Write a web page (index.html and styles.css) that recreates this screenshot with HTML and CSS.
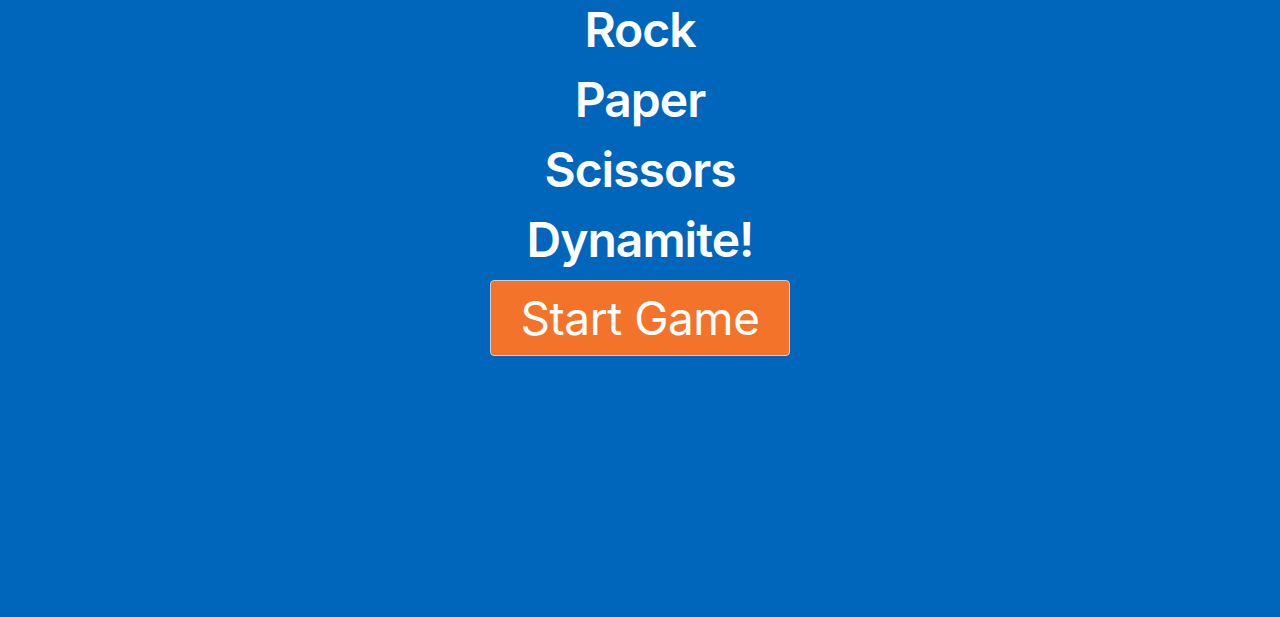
FILE: index.html
```html
<!DOCTYPE html>
<html lang="en">
<head>
<meta charset="utf-8">
<title>Rock Paper Scissors Dynamite</title>
<link rel="stylesheet" href="styles.css">
</head>
<body>
<main class="game">
  <h1 class="choice">Rock</h1>
  <h1 class="choice">Paper</h1>
  <h1 class="choice">Scissors</h1>
  <h1 class="choice">Dynamite!</h1>
  <button class="start-btn" type="button">Start Game</button>
</main>
</body>
</html>
```
FILE: styles.css
```css
html, body {
  margin: 0;
  padding: 0;
  height: 100%;
}
body {
  background: #0066bb;
  font-family: Inter, "Noto Sans", sans-serif;
  color: #ffffff;
}
.game {
  display: flex;
  flex-direction: column;
  align-items: center;
  padding-top: 1px;
}
.choice {
  margin: 0 0 12px 0;
  font-size: 48px;
  font-weight: 560;
  line-height: 58px;
  letter-spacing: -1px;
}
.start-btn {
  width: 300px;
  height: 76px;
  margin-top: -1px;
  background: #f4732a;
  color: #ffffff;
  border: 1px solid #c9cdd6;
  border-radius: 4px;
  font-family: Inter, "Noto Sans", sans-serif;
  font-size: 46px;
  font-weight: 400;
  line-height: 58px;
  letter-spacing: -0.5px;
  padding: 0 0 0 0;
}
```
